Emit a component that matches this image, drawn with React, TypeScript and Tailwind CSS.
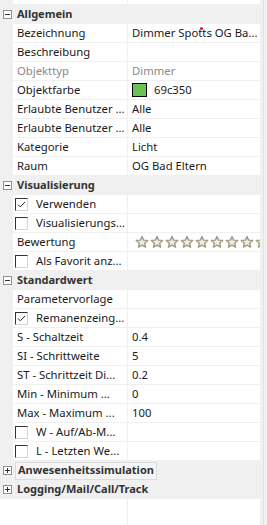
import React from "react";

type Row =
  | { kind: "header"; text: string; open: boolean; focused?: boolean }
  | { kind: "prop"; label: string; value?: string; muted?: boolean; color?: string; stars?: boolean; dot?: boolean }
  | { kind: "check"; label: string; checked: boolean };

const rows: Row[] = [
  { kind: "header", text: "Allgemein", open: true },
  { kind: "prop", label: "Bezeichnung", value: "Dimmer Spotts OG Ba...", dot: true },
  { kind: "prop", label: "Beschreibung" },
  { kind: "prop", label: "Objekttyp", value: "Dimmer", muted: true },
  { kind: "prop", label: "Objektfarbe", value: "69c350", color: "#69c350" },
  { kind: "prop", label: "Erlaubte Benutzer ...", value: "Alle" },
  { kind: "prop", label: "Erlaubte Benutzer ...", value: "Alle" },
  { kind: "prop", label: "Kategorie", value: "Licht" },
  { kind: "prop", label: "Raum", value: "OG Bad Eltern" },
  { kind: "header", text: "Visualisierung", open: true },
  { kind: "check", label: "Verwenden", checked: true },
  { kind: "check", label: "Visualisierungs...", checked: false },
  { kind: "prop", label: "Bewertung", stars: true },
  { kind: "check", label: "Als Favorit anz...", checked: false },
  { kind: "header", text: "Standardwert", open: true },
  { kind: "prop", label: "Parametervorlage" },
  { kind: "check", label: "Remanenzeing...", checked: true },
  { kind: "prop", label: "S - Schaltzeit", value: "0.4" },
  { kind: "prop", label: "SI - Schrittweite", value: "5" },
  { kind: "prop", label: "ST - Schrittzeit Di...", value: "0.2" },
  { kind: "prop", label: "Min - Minimum ...", value: "0" },
  { kind: "prop", label: "Max - Maximum ...", value: "100" },
  { kind: "check", label: "W - Auf/Ab-M...", checked: false },
  { kind: "check", label: "L - Letzten We...", checked: false },
  { kind: "header", text: "Anwesenheitssimulation", open: false, focused: true },
  { kind: "header", text: "Logging/Mail/Call/Track", open: false },
];

function Toggle({ open }: { open: boolean }) {
  return (
    <svg width="9" height="9" viewBox="0 0 9 9" className="shrink-0">
      <rect x="0.5" y="0.5" width="8" height="8" fill="#fff" stroke="#919191" />
      <line x1="2" y1="4.5" x2="7" y2="4.5" stroke="#333" />
      {!open && <line x1="4.5" y1="2" x2="4.5" y2="7" stroke="#333" />}
    </svg>
  );
}

function Star() {
  return (
    <svg width="14" height="14" viewBox="0 0 24 24" className="shrink-0">
      <path
        d="M12 2.5l2.9 6.3 6.9.7-5.2 4.6 1.5 6.8L12 17.4l-6.1 3.5 1.5-6.8-5.2-4.6 6.9-.7z"
        fill="#ecebe4"
        stroke="#a39d86"
        strokeWidth="2.4"
        strokeLinejoin="round"
      />
    </svg>
  );
}

function CheckBox({ checked }: { checked: boolean }) {
  return (
    <span className="relative block h-[13px] w-[13px] shrink-0 border border-t-[#333] border-l-[#333] border-b-[#d4d4d4] border-r-[#d4d4d4] bg-white">
      {checked && (
        <svg width="11" height="11" viewBox="0 0 11 11" className="absolute left-0 top-0">
          <path d="M2 5.5l2.3 2.3L9 3" fill="none" stroke="#222" strokeWidth="1" />
        </svg>
      )}
    </span>
  );
}

function RowView({ row }: { row: Row }) {
  if (row.kind === "header") {
    return (
      <div className="flex h-[19px] items-center bg-[#f0f0f0]">
        <div className="flex w-[13px] justify-center pl-[1px]">
          <Toggle open={row.open} />
        </div>
        <div
          className={`ml-[2px] flex h-[18px] items-center whitespace-nowrap px-[2px] text-[11px] font-bold text-[#333] ${
            row.focused ? "border border-[#dcdcdc] bg-[#f5f5f5]" : ""
          }`}
        >
          {row.text}
        </div>
      </div>
    );
  }
  return (
    <div className="flex h-[19px] bg-[#f0f0f0]">
      <div className="w-[13px] shrink-0" />
      <div className="flex w-[114px] shrink-0 items-center overflow-hidden whitespace-nowrap border-b border-[#f0f0f0] bg-white text-[11.3px]">
        {row.kind === "check" ? (
          <>
            <span className="ml-[2px]">
              <CheckBox checked={row.checked} />
            </span>
            <span className="ml-[8px] text-[#1a1a1a]">{row.label}</span>
          </>
        ) : (
          <span className={`pl-[4px] ${row.kind === "prop" && row.muted ? "text-[#8a8a8a]" : "text-[#1a1a1a]"}`}>
            {row.label}
          </span>
        )}
      </div>
      <div className="w-[1px] shrink-0 bg-[#f0f0f0]" />
      <div className="relative flex w-[132px] shrink-0 items-center overflow-hidden whitespace-nowrap border-b border-[#f0f0f0] bg-white pl-[4px] text-[11.3px]">
        {row.kind === "prop" && row.color && (
          <span className="mr-[7px] block h-[14px] w-[15px] shrink-0 border border-black" style={{ backgroundColor: row.color }} />
        )}
        {row.kind === "prop" && row.stars && (
          <div className="ml-[3px] flex gap-[1px]">
            {Array.from({ length: 9 }).map((_, i) => (
              <Star key={i} />
            ))}
          </div>
        )}
        {row.kind === "prop" && row.value && (
          <span className={row.muted ? "text-[#8a8a8a]" : "text-[#1a1a1a]"}>{row.value}</span>
        )}
        {row.kind === "prop" && row.dot && (
          <span className="absolute left-[72px] top-[3px] block h-[3px] w-[3px] rounded-full bg-[#e81123]" />
        )}
      </div>
      <div className="flex-1" />
    </div>
  );
}

export default function App() {
  return (
    <div
      className="relative h-[525px] w-[267px] overflow-hidden bg-white"
      style={{ fontFamily: '"Noto Sans", "Open Sans", sans-serif' }}
    >
      <div className="flex h-[525px]">
        <div className="w-[260px] shrink-0">
          {/* partial row scrolled off at top */}
          <div className="flex h-[5px] bg-[#f0f0f0]">
            <div className="w-[13px] shrink-0" />
            <div className="w-[114px] shrink-0 border-b border-[#f0f0f0] bg-white" />
            <div className="w-[1px] shrink-0 bg-[#f0f0f0]" />
            <div className="w-[132px] shrink-0 border-b border-[#f0f0f0] bg-white" />
          </div>
          {rows.map((r, i) => (
            <RowView key={i} row={r} />
          ))}
          <div className="flex h-[40px]">
            <div className="w-[127px] shrink-0 bg-white" />
            <div className="w-[1px] shrink-0 bg-[#f0f0f0]" />
            <div className="flex-1 bg-white" />
          </div>
        </div>
        <div className="flex flex-1 bg-[#f0f0f0]">
          <div className="ml-[3px] w-[1px] bg-[#e2e2e2]" />
        </div>
      </div>
    </div>
  );
}
